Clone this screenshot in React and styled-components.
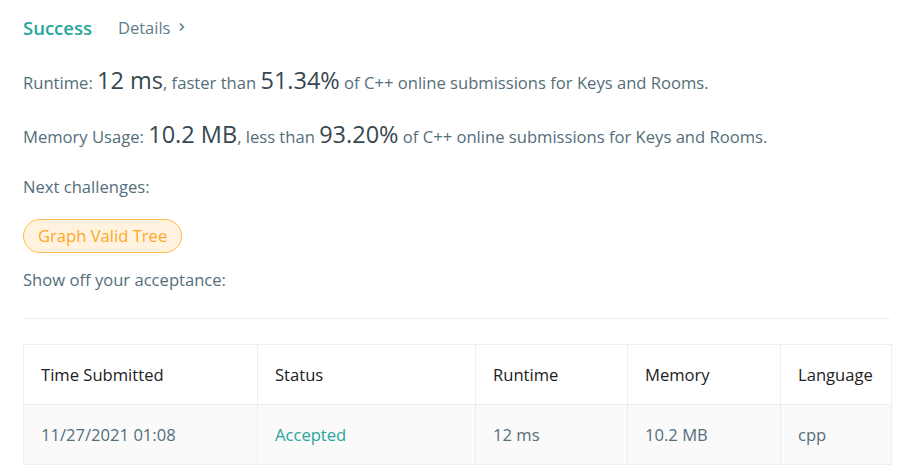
import React from 'react';
import styled, { createGlobalStyle } from 'styled-components';

const GlobalStyle = createGlobalStyle`
  body {
    margin: 0;
    background: #fff;
    font-family: "Open Sans", "Noto Sans", sans-serif;
  }
`;

const Page = styled.div`
  padding: 14px 15px 0 23px;
  color: #546e7a;
  font-size: 16.6px;
`;

const Header = styled.div`
  display: flex;
  align-items: center;
  gap: 26px;
  height: 26px;
`;

const Title = styled.span`
  color: #26a69a;
  font-size: 18.5px;
  font-weight: 600;
`;

const DetailsLink = styled.span`
  display: flex;
  align-items: center;
  gap: 8px;
  color: #607d8b;
  font-size: 16.5px;
`;

const Stat = styled.p`
  margin: ${props => props.first ? '25px' : '0'} 0 0;
  height: 54px;
  line-height: 30px;
  white-space: nowrap;
`;

const Big = styled.span`
  font-size: 23.5px;
  color: #37474f;
`;

const Label = styled.p`
  margin: ${props => props.top || 0} 0 0;
  line-height: 22px;
`;

const Pill = styled.span`
  display: inline-block;
  margin: 21px 0 16px;
  padding: 0 14px;
  height: 32px;
  line-height: 32px;
  border: 1px solid #ffb74d;
  border-radius: 17px;
  background: #fff3e0;
  color: #ffa726;
`;

const Divider = styled.hr`
  margin: 27px 0 25px;
  border: none;
  border-top: 1px solid #eeeeee;
`;

const Table = styled.table`
  width: 868px;
  table-layout: fixed;
  border-collapse: collapse;
`;

const Cell = styled.td`
  border: 1px solid #eeeeee;
  padding: 0 17px;
  height: 59px;
  color: ${props => props.accent ? '#26a69a' : '#546e7a'};
`;

const HeadCell = styled.th`
  border: 1px solid #eeeeee;
  padding: 0 17px;
  height: 59px;
  text-align: left;
  font-weight: 400;
  color: #212121;
`;

const BodyRow = styled.tr`
  background: #fafafa;
`;

const columns = [
  { title: 'Time Submitted', width: 234 },
  { title: 'Status', width: 218 },
  { title: 'Runtime', width: 152 },
  { title: 'Memory', width: 153 },
  { title: 'Language', width: 111 },
];

export default function App() {
  return (
    <>
      <GlobalStyle />
      <Page>
        <Header>
          <Title>Success</Title>
          <DetailsLink>
            Details
            <svg width="8" height="10" viewBox="0 0 8 10">
              <path d="M2 1.5 L5.5 5 L2 8.5" fill="none" stroke="#607d8b" strokeWidth="1.6" />
            </svg>
          </DetailsLink>
        </Header>
        <Stat first>
          Runtime: <Big>12 ms</Big>, faster than <Big>51.34%</Big> of C++ online submissions for Keys and Rooms.
        </Stat>
        <Stat>
          Memory Usage: <Big>10.2 MB</Big>, less than <Big>93.20%</Big> of C++ online submissions for Keys and Rooms.
        </Stat>
        <Label top="3px">Next challenges:</Label>
        <Pill>Graph Valid Tree</Pill>
        <Label>Show off your acceptance:</Label>
        <Divider />
        <Table>
          <colgroup>
            {columns.map(c => <col key={c.title} style={{ width: c.width }} />)}
          </colgroup>
          <thead>
            <tr>
              {columns.map(c => <HeadCell key={c.title}>{c.title}</HeadCell>)}
            </tr>
          </thead>
          <tbody>
            <BodyRow>
              <Cell>11/27/2021 01:08</Cell>
              <Cell accent>Accepted</Cell>
              <Cell>12 ms</Cell>
              <Cell>10.2 MB</Cell>
              <Cell>cpp</Cell>
            </BodyRow>
          </tbody>
        </Table>
      </Page>
    </>
  );
}
